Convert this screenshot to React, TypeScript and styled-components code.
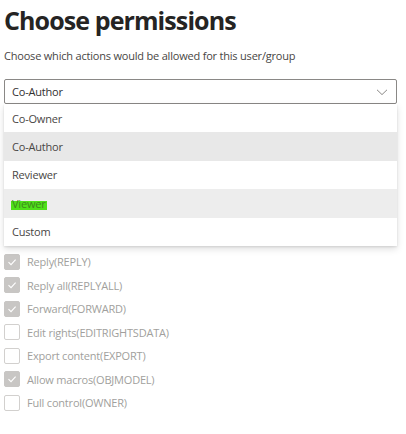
import React from 'react';
import styled, { createGlobalStyle } from 'styled-components';

const GlobalStyle = createGlobalStyle`
  html, body {
    margin: 0;
    padding: 0;
    background: #fff;
  }
  body {
    font-family: 'Open Sans', 'Noto Sans', sans-serif;
    color: #323130;
    letter-spacing: -0.2px;
  }
`;

const Page = styled.div`
  width: 406px;
  height: 434px;
  padding: 0 9px 0 4px;
  box-sizing: border-box;
  overflow: hidden;
`;

const Title = styled.h1`
  margin: 0;
  padding-top: 3px;
  font-size: 25px;
  line-height: 34px;
  font-weight: 700;
  color: #252423;
  letter-spacing: -0.9px;
`;

const Subtitle = styled.p`
  margin: 10px 0 0;
  font-size: 11px;
  line-height: 18px;
  color: #484644;
`;

const Dropdown = styled.div`
  margin-top: 14px;
  position: relative;
`;

const SelectBox = styled.div`
  height: 25px;
  border: 1px solid #8a8886;
  border-radius: 2px;
  box-sizing: border-box;
  display: flex;
  align-items: center;
  justify-content: space-between;
  padding: 0 8px 0 7px;
  font-size: 11px;
  color: #323130;
`;

const Menu = styled.ul`
  list-style: none;
  margin: 0;
  padding: 0;
  background: #fff;
  box-shadow: 0 3px 7px rgba(0, 0, 0, 0.13), 0 0.5px 2px rgba(0, 0, 0, 0.1);
`;

interface ItemProps {
  $shade?: string;
}
const MenuItem = styled.li<ItemProps>`
  height: 28.4px;
  display: flex;
  align-items: center;
  padding: 0 8px;
  font-size: 11px;
  color: #484644;
  background: ${({ $shade }) => $shade || '#fff'};
`;

const Marker = styled.span`
  background: linear-gradient(to bottom, transparent 35%, #4fe01a 35%, #4fe01a 92%, transparent 92%);
  color: #3d8a1e;
  padding: 0 1px;
  margin-left: -1px;
`;

const Checks = styled.div`
  margin-top: 4px;
  display: flex;
  flex-direction: column;
`;

const CheckRow = styled.label`
  height: 23.5px;
  display: flex;
  align-items: center;
  gap: 7px;
  font-size: 11px;
  color: #a19f9d;
`;

interface BoxProps {
  $checked: boolean;
}
const Box = styled.span<BoxProps>`
  width: 16px;
  height: 16px;
  box-sizing: border-box;
  border-radius: 2px;
  border: 1px solid ${({ $checked }) => ($checked ? '#c8c6c4' : '#d2d0ce')};
  background: ${({ $checked }) => ($checked ? '#c8c6c4' : '#fff')};
  display: inline-flex;
  align-items: center;
  justify-content: center;
`;

const Chevron = () => (
  <svg width="12" height="12" viewBox="0 0 12 12">
    <path d="M1 3.8 L6 8.6 L11 3.8" fill="none" stroke="#8a8886" strokeWidth="1" />
  </svg>
);

const Tick = () => (
  <svg width="10" height="10" viewBox="0 0 10 10">
    <path d="M1.5 5.2 L4 7.6 L8.6 2.6" fill="none" stroke="#fff" strokeWidth="1.1" />
  </svg>
);

const options = ['Co-Owner', 'Co-Author', 'Reviewer', 'Viewer', 'Custom'];

const rights = [
  { label: 'Reply(REPLY)', checked: true },
  { label: 'Reply all(REPLYALL)', checked: true },
  { label: 'Forward(FORWARD)', checked: true },
  { label: 'Edit rights(EDITRIGHTSDATA)', checked: false },
  { label: 'Export content(EXPORT)', checked: false },
  { label: 'Allow macros(OBJMODEL)', checked: true },
  { label: 'Full control(OWNER)', checked: false },
];

const shades: { [k: string]: string } = {
  'Co-Author': '#e8e8e8',
  Viewer: '#ededed',
};

const App: React.FC = () => (
  <Page>
    <GlobalStyle />
    <Title>Choose permissions</Title>
    <Subtitle>Choose which actions would be allowed for this user/group</Subtitle>
    <Dropdown>
      <SelectBox>
        <span>Co-Author</span>
        <Chevron />
      </SelectBox>
      <Menu>
        {options.map(o => (
          <MenuItem key={o} $shade={shades[o]}>
            {o === 'Viewer' ? <Marker>{o}</Marker> : o}
          </MenuItem>
        ))}
      </Menu>
    </Dropdown>
    <Checks>
      {rights.map(r => (
        <CheckRow key={r.label}>
          <Box $checked={r.checked}>{r.checked && <Tick />}</Box>
          {r.label}
        </CheckRow>
      ))}
    </Checks>
  </Page>
);

export default App;
